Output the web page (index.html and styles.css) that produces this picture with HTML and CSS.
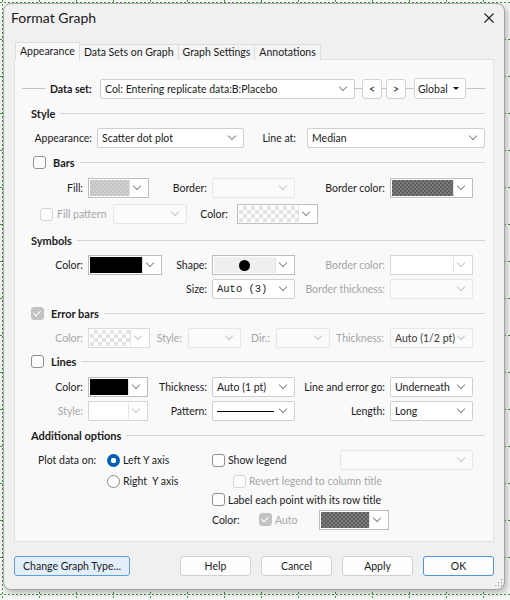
FILE: index.html
```html
<!DOCTYPE html>
<html lang="en">
<head>
    <meta charset="UTF-8">
    <title>Format Graph</title>
    <link rel="stylesheet" href="styles.css">
</head>
<body>
    <div class="dialog">
        <div class="titlebar">
            <span class="title">Format Graph</span>
            <svg class="close" width="10" height="10" viewBox="0 0 10 10">
                <path d="M0.5 0.5 L9.5 9.5 M9.5 0.5 L0.5 9.5" stroke="#1f1f1f" stroke-width="1.1" fill="none"/>
            </svg>
        </div>

        <div class="tabs">
            <div class="tab active">Appearance</div>
            <div class="tab">Data Sets on Graph</div>
            <div class="tab">Graph Settings</div>
            <div class="tab">Annotations</div>
        </div>

        <div class="page">
            <!-- data set selector -->
            <div class="dataset">
                <span class="seg seg-a"></span>
                <b class="ds-label">Data set:</b>
                <div class="select ds-select">Col: Entering replicate data:B:Placebo</div>
                <span class="seg seg-b"></span>
                <button class="nav">&lt;</button>
                <span class="seg seg-c"></span>
                <button class="nav">&gt;</button>
                <span class="seg seg-d"></span>
                <div class="global">Global <i class="tri"></i></div>
                <span class="seg seg-end"></span>
            </div>

            <!-- Style -->
            <div class="group"><b>Style</b></div>
            <div class="row row-24 g-appearance">
                <label class="lbl">Appearance:</label>
                <div class="select">Scatter dot plot</div>
                <label class="lbl lbl-wide">Line at:</label>
                <div class="select">Median</div>
            </div>

            <!-- Bars -->
            <div class="group"><span class="check bars-check"></span><b>Bars</b></div>
            <div class="row g6">
                <label class="lbl">Fill:</label>
                <div class="color w61"><span class="swatch checker-gray"></span></div>
                <label class="lbl">Border:</label>
                <div class="select off"></div>
                <label class="lbl">Border color:</label>
                <div class="color"><span class="swatch checker-dark"></span></div>
            </div>
            <div class="row row-28 fill-pattern">
                <span class="check off"></span>
                <label class="fp-label dim">Fill pattern</label>
                <div class="select off w74"></div>
                <label class="lbl fp-color">Color:</label>
                <div class="color w81"><span class="swatch checker-light"></span></div>
            </div>

            <!-- Symbols -->
            <div class="group"><b>Symbols</b></div>
            <div class="row row-24 g6">
                <label class="lbl">Color:</label>
                <div class="color w74"><span class="swatch black"></span></div>
                <label class="lbl">Shape:</label>
                <div class="color"><span class="swatch shape"><i class="dot"></i></span></div>
                <label class="lbl dim">Border color:</label>
                <div class="color off"><span class="swatch"></span></div>
            </div>
            <div class="row row-24 g6">
                <span></span>
                <span></span>
                <label class="lbl">Size:</label>
                <div class="select mono">Auto (3)</div>
                <label class="lbl dim">Border thickness:</label>
                <div class="select off"></div>
            </div>

            <!-- Error bars -->
            <div class="group"><span class="check ticked"></span><b>Error bars</b></div>
            <div class="row row-23 g-error">
                <label class="lbl dim">Color:</label>
                <div class="color off-border"><span class="swatch checker-light"></span></div>
                <label class="lbl lbl-6 dim">Style:</label>
                <div class="select off"></div>
                <label class="lbl lbl-6 dim">Dir.:</label>
                <div class="select off"></div>
                <label class="lbl lbl-6 dim">Thickness:</label>
                <div class="select off dark-text">Auto (1/2 pt)</div>
            </div>

            <!-- Lines -->
            <div class="group"><span class="check"></span><b>Lines</b></div>
            <div class="row g6">
                <label class="lbl">Color:</label>
                <div class="color w60"><span class="swatch black"></span></div>
                <label class="lbl">Thickness:</label>
                <div class="select">Auto (1 pt)</div>
                <label class="lbl">Line and error go:</label>
                <div class="select">Underneath</div>
            </div>
            <div class="row row-24 g6">
                <label class="lbl dim">Style:</label>
                <div class="color off w60"><span class="swatch"></span></div>
                <label class="lbl">Pattern:</label>
                <div class="select"><span class="pattern-line"></span></div>
                <label class="lbl">Length:</label>
                <div class="select">Long</div>
            </div>

            <!-- Additional options -->
            <div class="group"><b>Additional options</b></div>
            <div class="row row-24 g-extra">
                <label class="plot-label">Plot data on:</label>
                <div class="opt"><span class="radio on"></span>Left Y axis</div>
                <div class="opt"><span class="check"></span>Show legend</div>
                <div class="select off"></div>
            </div>
            <div class="row row-18 g-extra">
                <span></span>
                <div class="opt"><span class="radio"></span>Right&nbsp; Y axis</div>
                <div class="opt span2 indent dim"><span class="check off"></span>Revert legend to column title</div>
            </div>
            <div class="row row-19 g-extra">
                <span></span>
                <span></span>
                <div class="opt span2"><span class="check"></span>Label each point with its row title</div>
            </div>
            <div class="row row-21 g-extra">
                <span></span>
                <span></span>
                <div class="opt span2">
                    <span class="auto-label">Color:</span>
                    <span class="check ticked"></span>
                    <span class="auto dim">Auto</span>
                    <div class="color w70"><span class="swatch checker-dark"></span></div>
                </div>
            </div>
        </div>

        <div class="buttons">
            <button class="btn change">Change Graph Type...</button>
            <button class="btn push">Help</button>
            <button class="btn">Cancel</button>
            <button class="btn">Apply</button>
            <button class="btn primary">OK</button>
        </div>

        <svg class="grip" width="8" height="8" viewBox="0 0 8 8">
            <g fill="#a0a0a0">
                <rect x="6" y="0" width="1.2" height="1.2"/>
                <rect x="3" y="3" width="1.2" height="1.2"/>
                <rect x="6" y="3" width="1.2" height="1.2"/>
                <rect x="0" y="6" width="1.2" height="1.2"/>
                <rect x="3" y="6" width="1.2" height="1.2"/>
                <rect x="6" y="6" width="1.2" height="1.2"/>
            </g>
        </svg>
    </div>
</body>
</html>
```

FILE: styles.css
```css
* {
    margin: 0;
    padding: 0;
    box-sizing: border-box;
}

body {
    position: relative;
    width: 510px;
    height: 600px;
    overflow: hidden;
    background-color: #f8f8f8;
    font-family: Lato, "Noto Sans", sans-serif;
    font-size: 10.5px;
    color: #1b1b1b;
}

/* dotted layout grid behind the dialog */
body::before,
body::after {
    content: "";
    position: absolute;
    inset: 0;
}

body::before {
    background: repeating-linear-gradient(to right, #3f9b3f 0 1px, transparent 1px 37px) 2px 0;
    -webkit-mask: repeating-linear-gradient(to bottom, #000 0 2px, transparent 2px 4px);
    mask: repeating-linear-gradient(to bottom, #000 0 2px, transparent 2px 4px);
}

body::after {
    background: repeating-linear-gradient(to bottom, #3f9b3f 0 1px, transparent 1px 37px) 0 2px;
    -webkit-mask: repeating-linear-gradient(to right, #000 0 2px, transparent 2px 4px);
    mask: repeating-linear-gradient(to right, #000 0 2px, transparent 2px 4px);
}

.dialog {
    position: relative;
    z-index: 1;
    width: 502px;
    height: 587px;
    margin: 3px 0 0 3px;
    background-color: #f0f0f0;
    border: 1px solid #a4a4a4;
    border-radius: 8px;
    box-shadow: 2px 3px 7px rgba(0, 0, 0, 0.28);
}

.titlebar {
    display: flex;
    align-items: center;
    justify-content: space-between;
    height: 27px;
    padding: 0 10px 0 7px;
}

.title {
    font-size: 14px;
    color: #1a1a1a;
}

/* tabs */
.tabs {
    position: relative;
    z-index: 1;
    display: flex;
    align-items: flex-end;
    height: 18px;
    margin: 11px 0 -1px 11px;
}

.tab {
    height: 16px;
    padding: 0 4px;
    line-height: 14px;
    background-color: #f4f4f4;
    border: 1px solid #dddddd;
    border-bottom: none;
    margin-right: -1px;
}

.tab.active {
    height: 18px;
    line-height: 16px;
    background-color: #f9f9f9;
}

.page {
    width: 480px;
    height: 483px;
    margin-left: 10px;
    padding: 16px 8px 0 7px;
    background-color: #f9f9f9;
    border: 1px solid #e2e2e2;
}

/* data set line */
.dataset {
    display: flex;
    align-items: center;
    height: 25px;
}

.seg {
    height: 1px;
    background-color: #c4c4c4;
}

.seg-a { width: 23px; }
.seg-b { width: 7px; }
.seg-c { width: 4px; }
.seg-d { width: 8px; }
.seg-end { flex: 1; }

.ds-label {
    margin: 0 3px 0 5px;
    width: 47px;
    white-space: nowrap;
}

.ds-select {
    width: 255px;
    height: 22px;
}

.nav {
    width: 20px;
    height: 20px;
    background-color: #fdfdfd;
    border: 1px solid #d2d2d2;
    border-radius: 3px;
    font: inherit;
    color: #1b1b1b;
}

.global {
    display: flex;
    align-items: center;
    justify-content: space-between;
    width: 52px;
    height: 21px;
    padding: 0 6px 0 3px;
    background-color: #fff;
    border: 1px solid #d2d2d2;
    border-radius: 3px;
}

.tri {
    width: 0;
    height: 0;
    border-left: 3px solid transparent;
    border-right: 3px solid transparent;
    border-top: 3px solid #111;
}

/* group headings with a rule */
.group {
    display: flex;
    align-items: center;
    height: 25px;
    margin-left: 9px;
    font-size: 11px;
}

.group::after {
    content: "";
    flex: 1;
    height: 1px;
    margin-left: 5px;
    background-color: #d3d3d3;
}

.group .check {
    margin-right: 7px;
}

.group .bars-check {
    margin-left: 2px;
}

/* control rows */
.row {
    height: 25px;
    margin-left: 9px;
    align-items: center;
}

.row-18 { height: 18px; }
.row-19 { height: 19px; }
.row-21 { height: 21px; }
.row-23 { height: 23px; }
.row-24 { height: 24px; }
.row-28 { height: 28px; }

.g6 {
    display: grid;
    grid-template-columns: 57px 62px 62px 83px 95px 83px;
}

.g-appearance {
    display: grid;
    grid-template-columns: 66px 147px 63px 178px;
}

.g-error {
    display: grid;
    grid-template-columns: 57px 62px 38px 53px 35px 54px 60px 83px;
}

.g-extra {
    display: grid;
    grid-template-columns: 76px 105px 128px 133px;
}

.lbl {
    text-align: right;
    padding-right: 5px;
    white-space: nowrap;
}

.lbl-6 { padding-right: 6px; }
.lbl-wide { padding-right: 11px; }

.dim {
    color: #a6a6a6;
}

/* dropdowns */
.select {
    position: relative;
    display: flex;
    align-items: center;
    height: 20px;
    padding: 0 20px 0 4px;
    background-color: #fff;
    border: 1px solid #cfcfcf;
    border-radius: 2px;
    white-space: nowrap;
    overflow: hidden;
}

.select::after,
.color::after {
    content: "";
    position: absolute;
    right: 8px;
    top: 4px;
    width: 5px;
    height: 5px;
    border-right: 1px solid #8a8a8a;
    border-bottom: 1px solid #8a8a8a;
    transform: rotate(45deg);
}

.select.off {
    background-color: #fbfbfb;
    border-color: #e6e6e6;
}

.select.off::after,
.color.off::after,
.color.off-border::after {
    border-color: #c6c6c6;
}

.dark-text {
    color: #3a3a3a;
}

.mono {
    font-family: "Liberation Mono", monospace;
    font-size: 10.5px;
}

.pattern-line {
    width: 59px;
    height: 1px;
    background-color: #000;
}

.w60 { width: 60px; }
.w61 { width: 61px; }
.w70 { width: 70px; }
.w74 { width: 74px; }
.w81 { width: 81px; }

/* colour pickers: swatch plus arrow part */
.color {
    position: relative;
    display: flex;
    height: 20px;
    padding: 1px 18px 1px 1px;
    background-color: #fff;
    border: 1px solid #bdbdbd;
}

.color.off {
    border-color: #d6d6d6;
}

.color.off-border {
    border-color: #dadada;
}

.swatch {
    flex: 1;
    border-right: 1px solid #e2e2e2;
}

.checker-light {
    background-image: conic-gradient(#e3e3e3 25%, #fff 0 50%, #e3e3e3 0 75%, #fff 0);
    background-size: 8px 8px;
}

.checker-gray {
    background-image: conic-gradient(#c4c4c4 25%, #d0d0d0 0 50%, #c4c4c4 0 75%, #d0d0d0 0);
    background-size: 4px 4px;
}

.checker-dark {
    background-image: conic-gradient(#5e5e5e 25%, #7a7a7a 0 50%, #5e5e5e 0 75%, #7a7a7a 0);
    background-size: 4px 4px;
}

.black {
    background-color: #000;
}

.shape {
    display: flex;
    align-items: center;
    justify-content: center;
    background-color: #efefef;
}

.dot {
    width: 11px;
    height: 11px;
    border-radius: 50%;
    background-color: #000;
}

/* fill pattern row */
.fill-pattern {
    display: flex;
}

.fill-pattern .check {
    margin-left: 9px;
}

.fp-label {
    width: 56px;
    margin-left: 4px;
}

.fp-color {
    width: 50px;
    padding-right: 9px;
}

/* check boxes and radio buttons */
.check {
    position: relative;
    flex: none;
    width: 13px;
    height: 13px;
    background-color: #fdfdfd;
    border: 1px solid #8f8f8f;
    border-radius: 3px;
}

.check.off {
    border-color: #d4d4d4;
}

.check.ticked {
    background-color: #c3c3c3;
    border-color: #c3c3c3;
}

.check.ticked::after {
    content: "";
    position: absolute;
    left: 3px;
    top: 1px;
    width: 3px;
    height: 6px;
    border-right: 1px solid #fff;
    border-bottom: 1px solid #fff;
    transform: rotate(45deg);
}

.radio {
    flex: none;
    width: 13px;
    height: 13px;
    border-radius: 50%;
    border: 1px solid #8a8a8a;
    background-color: #fff;
}

.radio.on {
    border: none;
    background: radial-gradient(circle, #fff 0 2.5px, #005fb8 3px);
}

.opt {
    display: flex;
    align-items: center;
    gap: 3px;
    white-space: nowrap;
}

.span2 {
    grid-column: span 2;
}

.indent {
    padding-left: 21px;
}

.plot-label {
    padding-left: 7px;
}

.auto-label {
    width: 44px;
}

.auto {
    width: 41px;
}

/* bottom buttons */
.buttons {
    display: flex;
    gap: 10px;
    height: 20px;
    margin-top: 14px;
    padding: 0 10px;
}

.btn {
    width: 71px;
    height: 20px;
    background-color: #fdfdfd;
    border: 1px solid #d0d0d0;
    border-radius: 3px;
    font: inherit;
    color: #1b1b1b;
}

.btn.change {
    width: 116px;
    background-color: #e2eefa;
    border-color: #5f9fe0;
}

.btn.push {
    margin-left: auto;
}

.btn.primary {
    border-color: #4f93dc;
}

.grip {
    position: absolute;
    right: 1px;
    bottom: 2px;
}
```
